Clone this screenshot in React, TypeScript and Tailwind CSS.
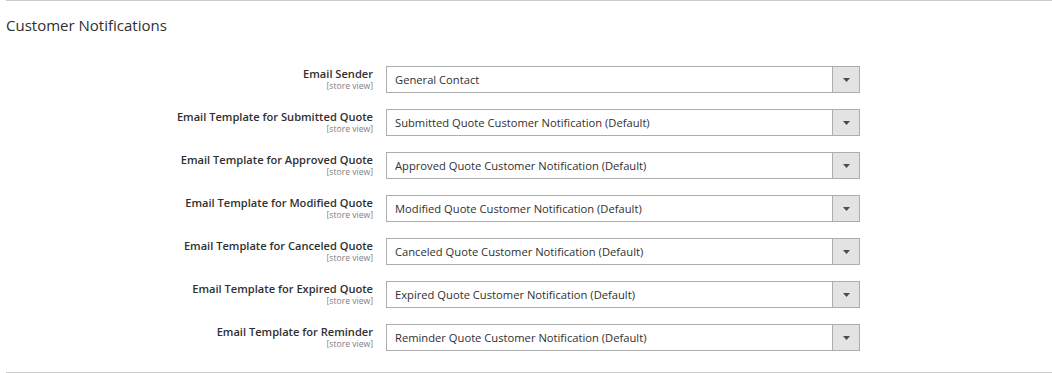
import React from "react";

const rows: [string, string][] = [
  ["Email Sender", "General Contact"],
  ["Email Template for Submitted Quote", "Submitted Quote Customer Notification (Default)"],
  ["Email Template for Approved Quote", "Approved Quote Customer Notification (Default)"],
  ["Email Template for Modified Quote", "Modified Quote Customer Notification (Default)"],
  ["Email Template for Canceled Quote", "Canceled Quote Customer Notification (Default)"],
  ["Email Template for Expired Quote", "Expired Quote Customer Notification (Default)"],
  ["Email Template for Reminder", "Reminder Quote Customer Notification (Default)"],
];

export default function App() {
  return (
    <div className="w-[1052px] h-[373px] bg-white pl-[6px] font-['Open_Sans',sans-serif]">
      <div className="border-t border-[#cccccc] pt-[14px]">
        <h2 className="text-[15px] leading-[20px] text-[#303030] font-medium">Customer Notifications</h2>
        <div className="mt-[31px] flex flex-col gap-[16px]">
          {rows.map(([label, value]) => (
            <div key={label} className="flex h-[27px]">
              <div className="w-[380px] pr-[13px] flex flex-col items-end">
                <span className="text-[11.1px] leading-[15px] font-semibold text-[#303030]">{label}</span>
                <span className="text-[8.6px] leading-[11px] text-[#808080]">[store view]</span>
              </div>
              <div className="w-[474px] h-[27px] flex border border-[#adadad] bg-white">
                <div className="flex-1 flex items-center pl-[8px] pt-[1px] text-[11.2px] text-[#303030]">{value}</div>
                <div className="w-[27px] h-full border-l border-[#adadad] bg-[#e3e3e3] flex items-center justify-center">
                  <svg width="7" height="4" viewBox="0 0 7 4">
                    <polygon points="0,0 7,0 3.5,4" fill="#514943" />
                  </svg>
                </div>
              </div>
            </div>
          ))}
        </div>
        <div className="mt-[21px] border-t border-[#cccccc]" />
      </div>
    </div>
  );
}
